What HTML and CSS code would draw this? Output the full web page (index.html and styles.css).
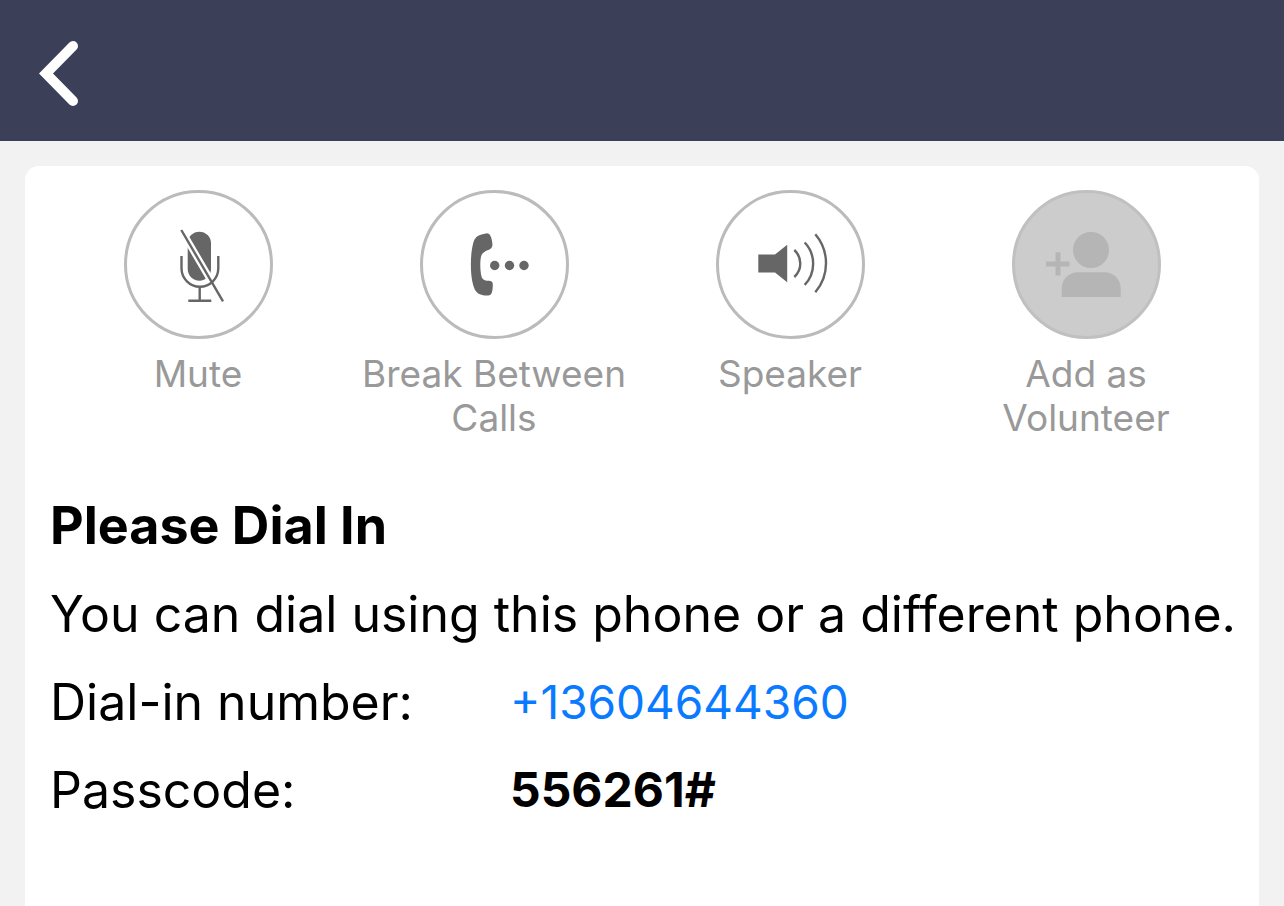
FILE: index.html
```html
<!DOCTYPE html>
<html lang="en">
<head>
    <meta charset="UTF-8">
    <meta name="viewport" content="width=device-width, initial-scale=1.0">
    <title>Please Dial In</title>
    <link rel="stylesheet" href="styles.css">
</head>
<body>
    <header class="top-bar">
        <button class="back-button" type="button" aria-label="Back">
            <svg width="40" height="66" viewBox="0 0 40 66">
                <path d="M33 5 L6 32.5 L33 60" fill="none" stroke="#fff" stroke-width="10" stroke-linecap="round" stroke-linejoin="miter"/>
            </svg>
        </button>
    </header>
    <main class="card">
        <div class="actions">
            <button class="action" type="button">
                <span class="circle">
                    <svg viewBox="0 0 149 149">
                        <rect x="63.7" y="41.7" width="23.3" height="49" rx="11.6" fill="#666"/>
                        <path d="M57.3 40 L99 111.3" stroke="#fff" stroke-width="7"/>
                        <g fill="none" stroke="#666" stroke-width="2.4">
                            <path d="M57.5 66 V78.3 A18.4 18.4 0 0 0 94.3 78.3 V66"/>
                            <path d="M75.7 97 V110.7 M64.3 110.7 H87.3"/>
                            <path d="M57.3 40 L99 111.3"/>
                        </g>
                    </svg>
                </span>
                <span class="label">Mute</span>
            </button>
            <button class="action" type="button">
                <span class="circle">
                    <svg viewBox="0 0 149 149" fill="#666">
                        <path d="M53 54 C54.3 47 58 44.5 66.3 43.4 C69.5 43 71 46 71.8 50 C72.8 55 73 58 69 59.8 C64 61.5 62 63.5 61 66.5 C60 72 60 80 61.5 86.5 C62.4 89.8 65 90.6 68 90.8 C72 91 73 92 72.8 95.5 C72.7 99 72.3 102.5 71 104.3 C69.5 106.3 63 105.6 60 104.3 C56 102.8 54.5 99.5 53 94.5 C50.3 84.5 50 66 53 54 Z"/>
                        <circle cx="74.7" cy="75.5" r="4.7"/>
                        <circle cx="89.5" cy="75.5" r="4.7"/>
                        <circle cx="104" cy="75.5" r="4.7"/>
                    </svg>
                </span>
                <span class="label">Break Between Calls</span>
            </button>
            <button class="action" type="button">
                <span class="circle">
                    <svg viewBox="0 0 149 149">
                        <path d="M42.3 64.5 H59 L71.2 54.7 V92.3 L59 82.5 H42.3 Z" fill="#666"/>
                        <g fill="none" stroke="#666" stroke-width="2.4">
                            <path d="M78.3 60 A18.2 18.2 0 0 1 78.3 87"/>
                            <path d="M88.7 52.5 A30.7 30.7 0 0 1 88.7 94.8"/>
                            <path d="M99.3 44.3 A44.6 44.6 0 0 1 99.3 102.3"/>
                        </g>
                    </svg>
                </span>
                <span class="label">Speaker</span>
            </button>
            <button class="action" type="button" disabled>
                <span class="circle">
                    <svg viewBox="0 0 149 149" fill="#b5b5b5">
                        <circle cx="79" cy="60" r="18"/>
                        <path d="M49.7 107 V99 C49.7 89 57 82.3 66 82.3 H92.4 C101.4 82.3 108.7 89 108.7 99 V107 Z"/>
                        <path d="M43.5 62.3 H48.5 V71.5 H57.5 V76.5 H48.5 V85.5 H43.5 V76.5 H34 V71.5 H43.5 Z"/>
                    </svg>
                </span>
                <span class="label">Add as Volunteer</span>
            </button>
        </div>
        <section class="dial-in">
            <h1>Please Dial In</h1>
            <p>You can dial using this phone or a different phone.</p>
            <dl>
                <dt>Dial-in number:</dt>
                <dd><a href="tel:+13604644360">+13604644360</a></dd>
                <dt>Passcode:</dt>
                <dd class="passcode">556261#</dd>
            </dl>
        </section>
    </main>
</body>
</html>
```
FILE: styles.css
```css
* {
    box-sizing: border-box;
}
body {
    display: flex;
    flex-direction: column;
    min-height: 100vh;
    margin: 0;
    background-color: #f2f2f2;
    color: #000;
    font-family: Inter, sans-serif;
}
.top-bar {
    padding: 41px 40px 34px;
    background-color: #3b3f58;
}
.back-button {
    display: block;
    padding: 0;
    border: none;
    background: none;
    cursor: pointer;
}
.back-button svg {
    display: block;
    overflow: visible;
}
.card {
    flex: 1;
    margin: 25px 25px 0;
    padding: 24px 0;
    border-radius: 14px 14px 0 0;
    background-color: #fff;
}
.actions {
    display: grid;
    grid-template-columns: repeat(4, 1fr);
    padding: 0 25px;
}
.action {
    display: flex;
    flex-direction: column;
    align-items: center;
    gap: 13px;
    padding: 0 12px;
    border: none;
    background: none;
    color: #999;
    font-family: inherit;
    font-size: 37px;
    line-height: 44px;
    cursor: pointer;
}
.action:disabled {
    cursor: default;
}
.circle {
    position: relative;
    width: 149px;
    height: 149px;
    border: 3px solid #bbb;
    border-radius: 50%;
}
.circle svg {
    position: absolute;
    top: -3px;
    left: -3px;
    width: 149px;
    height: 149px;
}
.action:disabled .circle {
    border-color: #c0c0c0;
    background-color: #ccc;
}
.dial-in {
    margin-top: 42px;
    padding: 0 20px 0 25px;
    font-size: 50px;
    line-height: 88px;
}
.dial-in h1,
.dial-in p,
.dial-in dl,
.dial-in dd {
    margin: 0;
}
.dial-in h1 {
    font-size: 52px;
    font-weight: 700;
}
.dial-in dl {
    display: grid;
    grid-template-columns: 460px 1fr;
}
.dial-in dd {
    font-size: 46px;
}
.dial-in a {
    color: #0a7aff;
    text-decoration: none;
}
.dial-in .passcode {
    font-size: 48px;
    font-weight: 700;
}
```
